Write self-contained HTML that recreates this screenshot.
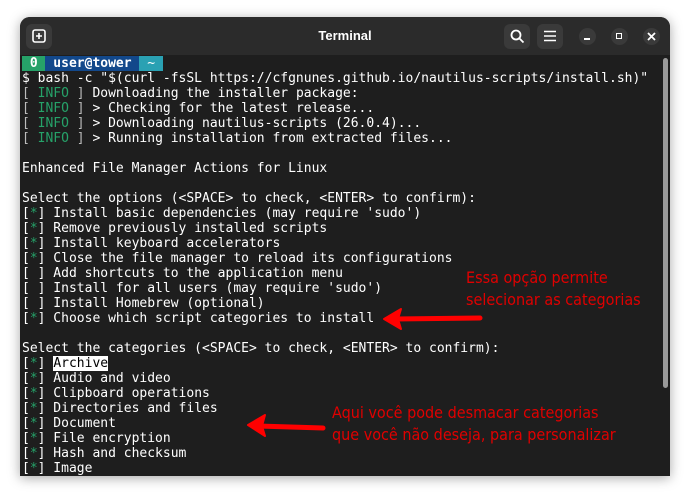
<!DOCTYPE html>
<html><head><style>
body{margin:0;width:690px;height:498px;background:#fff;position:relative;overflow:hidden;font-family:"Liberation Sans",sans-serif}
.win{position:absolute;left:20px;top:17px;width:650px;height:459px;background:#1e1e1e;border-radius:10px 10px 0 0;box-shadow:0 2px 12px rgba(0,0,0,.35);overflow:hidden}
.tb{position:absolute;left:0;top:0;width:650px;height:38px;background:#2b2b2b}
.title{position:absolute;left:0;right:0;top:11px;text-align:center;color:#fff;font-weight:bold;font-size:13px}
.btn{position:absolute;top:7px;width:26px;height:25px;border-radius:6px;background:#3a3a3a}
.cb{position:absolute;top:11px;width:17px;height:17px;border-radius:50%;background:#3a3a3a}
.term{position:absolute;left:2px;top:39px;font-family:"DejaVu Sans Mono",monospace;font-size:13px;line-height:15px;color:#fff;white-space:pre}
.g{color:#26a269}.i{color:#bbb}
.sb{position:absolute;left:643px;top:41px;width:5px;height:330px;background:#9a9a9a;border-radius:3px}
.ann{position:absolute;color:#e00000;font-size:16px;line-height:22px;font-family:"DejaVu Sans Condensed","Liberation Sans",sans-serif}
</style></head><body>
<div class="win">
<div class="tb">
<div class="btn" style="left:6px"></div>
<svg style="position:absolute;left:12px;top:12px" width="14" height="14"><rect x="1" y="1" width="12" height="12" rx="2" fill="none" stroke="#fff" stroke-width="1.6"/><path d="M7 4v6M4 7h6" stroke="#fff" stroke-width="1.6"/></svg>
<div class="title">Terminal</div>
<div class="btn" style="left:484px"></div>
<svg style="position:absolute;left:490px;top:12px" width="15" height="15"><circle cx="6" cy="6" r="4.5" fill="none" stroke="#fff" stroke-width="1.8"/><path d="M9.5 9.5l4 4" stroke="#fff" stroke-width="1.8"/></svg>
<div class="btn" style="left:517px"></div>
<svg style="position:absolute;left:523px;top:12px" width="14" height="14"><path d="M1 2.5h12M1 7h12M1 11.5h12" stroke="#fff" stroke-width="1.6"/></svg>
<div class="cb" style="left:559px"></div><div style="position:absolute;left:564px;top:21px;width:6px;height:2px;background:#fff"></div>
<div class="cb" style="left:591px"></div><div style="position:absolute;left:596px;top:16px;width:4px;height:4px;border:1.5px solid #fff"></div>
<div class="cb" style="left:623px"></div>
<svg style="position:absolute;left:627px;top:15px" width="9" height="9"><path d="M1 1l7 7M8 1l-7 7" stroke="#fff" stroke-width="1.8"/></svg>
</div>
<div class="term"><span style="background:#26a269;font-weight:bold"> 0 </span><span style="background:#12488b;font-weight:bold"> user@tower </span><span style="background:#2aa1b3"> ~ </span>
$ bash -c "$(curl -fsSL https://cfgnunes.github.io/nautilus-scripts/install.sh)"
<span class="i">[</span> <span class="g">INFO</span> <span class="i">]</span> Downloading the installer package:
<span class="i">[</span> <span class="g">INFO</span> <span class="i">]</span> &gt; Checking for the latest release...
<span class="i">[</span> <span class="g">INFO</span> <span class="i">]</span> &gt; Downloading nautilus-scripts (26.0.4)...
<span class="i">[</span> <span class="g">INFO</span> <span class="i">]</span> &gt; Running installation from extracted files...

Enhanced File Manager Actions for Linux

Select the options (&lt;SPACE&gt; to check, &lt;ENTER&gt; to confirm):
[<span class="g">*</span>] Install basic dependencies (may require 'sudo')
[<span class="g">*</span>] Remove previously installed scripts
[<span class="g">*</span>] Install keyboard accelerators
[<span class="g">*</span>] Close the file manager to reload its configurations
[ ] Add shortcuts to the application menu
[ ] Install for all users (may require 'sudo')
[ ] Install Homebrew (optional)
[<span class="g">*</span>] Choose which script categories to install

Select the categories (&lt;SPACE&gt; to check, &lt;ENTER&gt; to confirm):
[<span class="g">*</span>] <span style="background:#fff;color:#000">Archive</span>
[<span class="g">*</span>] Audio and video
[<span class="g">*</span>] Clipboard operations
[<span class="g">*</span>] Directories and files
[<span class="g">*</span>] Document
[<span class="g">*</span>] File encryption
[<span class="g">*</span>] Hash and checksum
[<span class="g">*</span>] Image</div>
<div class="sb"></div>
</div>
<div class="ann" style="left:466px;top:267px">Essa opção permite<br>selecionar as categorias</div>
<div class="ann" style="left:332px;top:402px">Aqui você pode desmacar categorias<br>que você não deseja, para personalizar</div>
<svg style="position:absolute;left:0;top:0" width="690" height="498">
<path d="M480 318L395 319" stroke="#f00" stroke-width="5" stroke-linecap="round"/>
<path d="M384 319L401 309L398 319L401 329Z" fill="#f00" stroke="#f00" stroke-width="2" stroke-linejoin="round"/>
<path d="M323 428L258 426" stroke="#f00" stroke-width="5" stroke-linecap="round"/>
<path d="M248 425L265 415L262 426L265 436Z" fill="#f00" stroke="#f00" stroke-width="2" stroke-linejoin="round"/>
</svg>
</body></html>
